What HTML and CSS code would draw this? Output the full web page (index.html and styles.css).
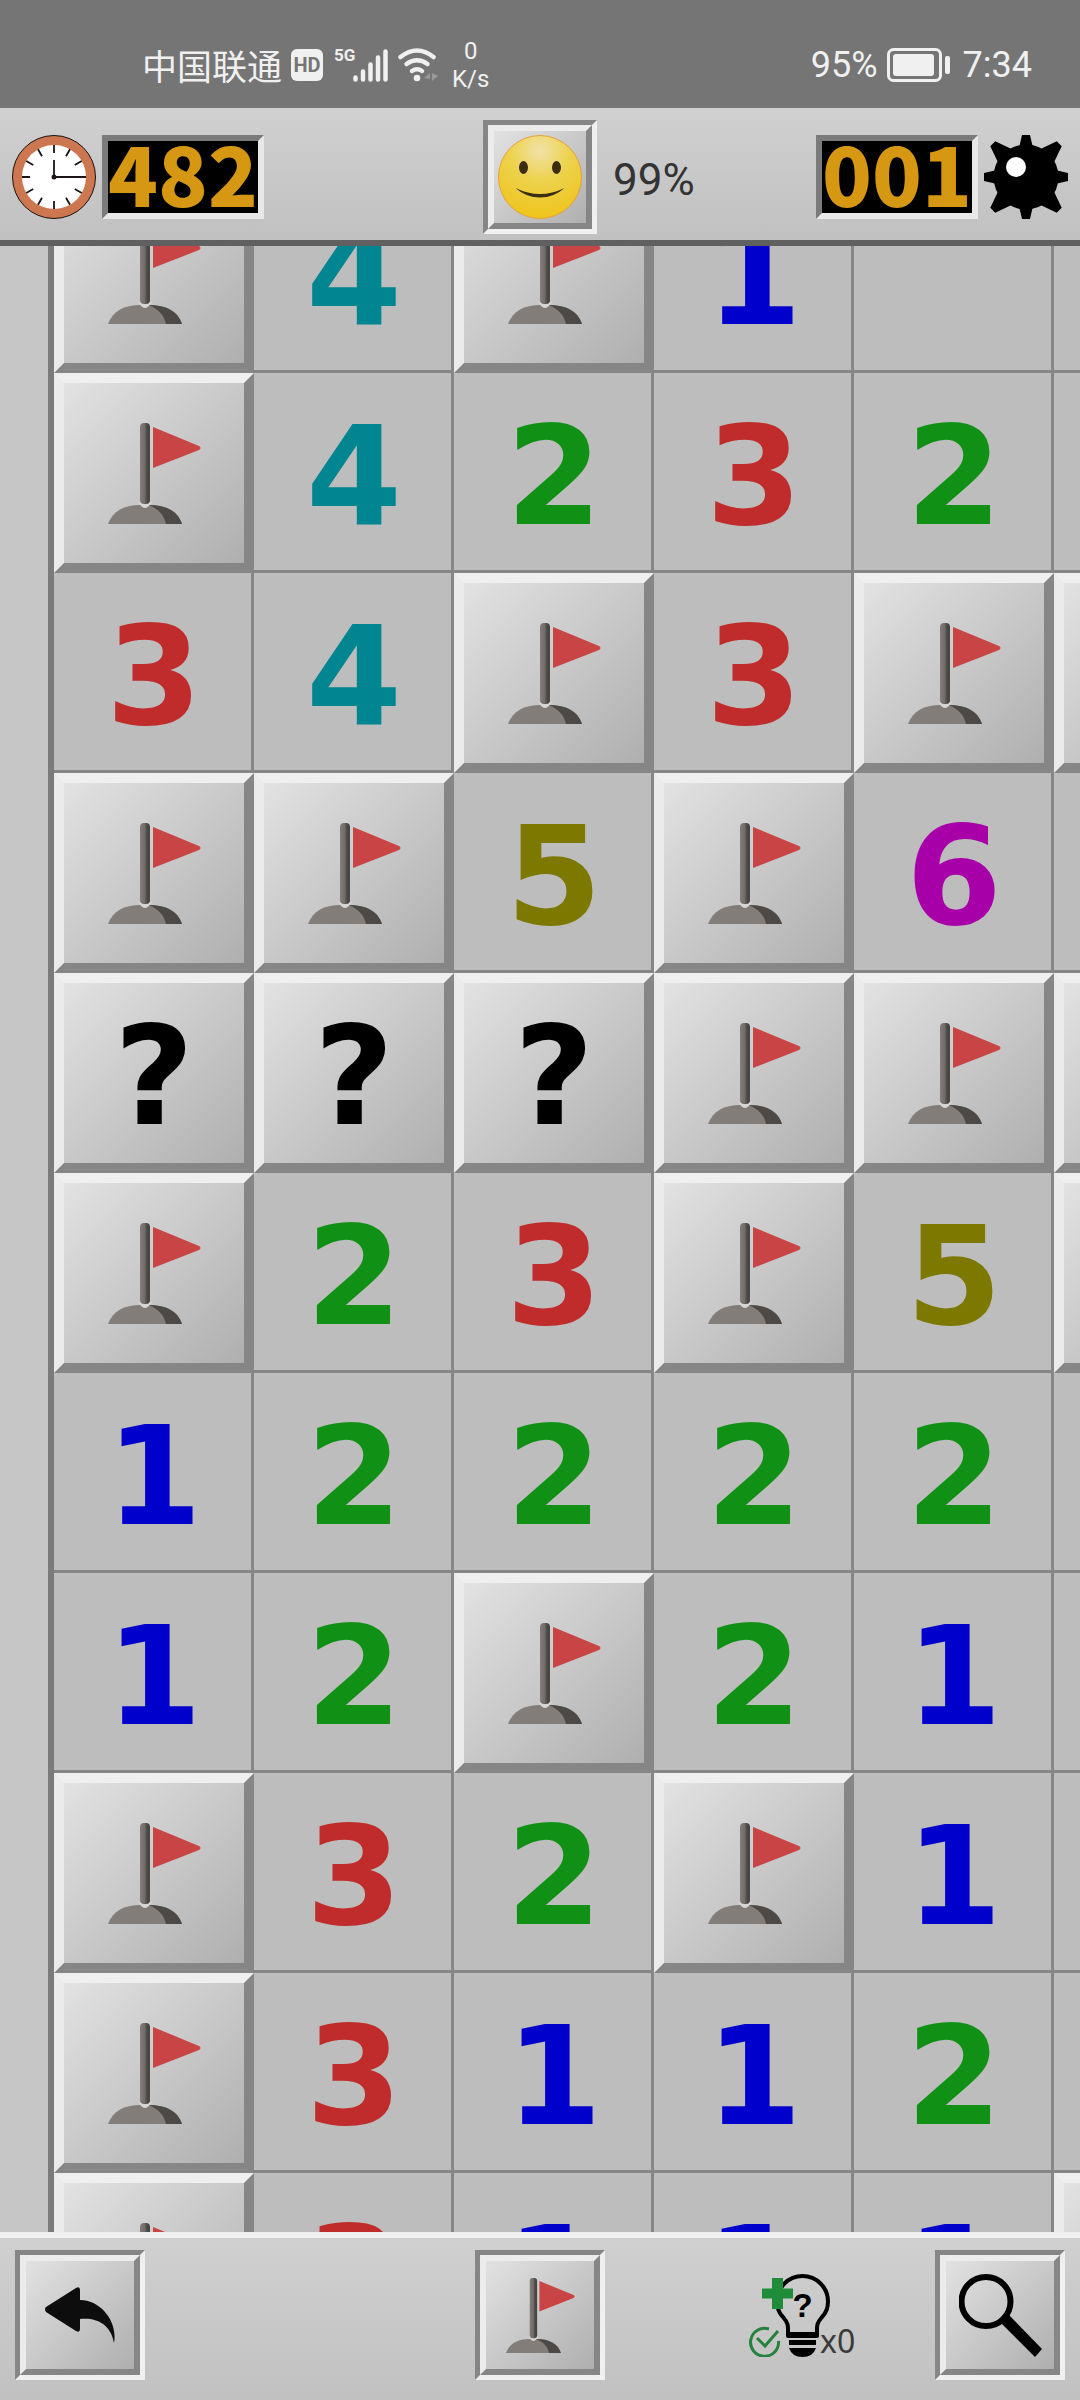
FILE: index.html
```html
<!DOCTYPE html>
<html lang="en">
<head>
<meta charset="utf-8">
<meta name="viewport" content="width=device-width, initial-scale=1">
<title>Minesweeper</title>
<link rel="stylesheet" href="styles.css">
</head>
<body>
<svg class="defs" aria-hidden="true">
  <linearGradient id="pole" x1="0" x2="1" y1="0" y2="0">
    <stop offset="0" stop-color="#847f7c"/><stop offset=".5" stop-color="#6f6a67"/><stop offset=".7" stop-color="#4a4644"/><stop offset="1" stop-color="#4a4644"/>
  </linearGradient>
  <symbol id="flag" viewBox="0 0 101 101">
    <path d="M4 101C9 88 20 82 36 82H46C62 82 74 88 78 101Z" fill="#837d79"/>
    <path d="M44 82C62 82 74 88 78 101H62C60 92 55 86 44 82Z" fill="#4d4946"/>
    <path d="M36 80Q41 88 46 80Z" fill="#d6d6d6" stroke="#d6d6d6" stroke-width="2"/>
    <rect x="36" y="0" width="10" height="81" rx="4" fill="url(#pole)"/>
    <path d="M49 4L95 23Q98 25 95 27L49 45Z" fill="#c84445"/>
  </symbol>
</svg>
<div class="app">
  <div class="status">
    <div class="status-group">
      <span class="carrier">中国联通</span>
      <span class="hd">HD</span>
      <span class="net">5G</span>
      <svg class="signal" width="35" height="33" viewBox="0 0 35 33" aria-hidden="true"><path d="M2.500 28.500v2M10 22.500v8M17.500 15.500v15M25 8.500v22M32.500 2.500v28" stroke="#f0f0f0" stroke-width="4.500" stroke-linecap="round"/></svg>
      <svg class="wifi" width="40" height="34" viewBox="0 0 40 34" aria-hidden="true"><g fill="none" stroke="#f0f0f0" stroke-width="4.500" stroke-linecap="round"><path d="M2.500 9Q19 -4 35.500 9"/><path d="M8.500 16Q19 8.500 29.500 16"/><path d="M14 23Q19 19.500 24 23"/></g><circle cx="19" cy="30" r="3.300" fill="#f0f0f0"/><path d="M26 30l6-5v9v-3M40 28l-6 5v-8z" fill="#999"/></svg>
      <span class="speed"><span>0</span><span>K/s</span></span>
    </div>
    <div class="status-group">
      <span class="clock-text">95%</span>
      <svg class="battery" width="63" height="34" viewBox="0 0 63 34" aria-hidden="true"><rect x="1.500" y="1.500" width="52" height="31" rx="5" fill="none" stroke="#f0f0f0" stroke-width="3"/><rect x="6" y="6" width="41" height="22" rx="3" fill="#f0f0f0"/><rect x="58" y="8" width="5" height="18" rx="2" fill="#f0f0f0"/></svg>
      <span class="clock-text time">7:34</span>
    </div>
  </div>

  <header class="bar header">
    <div class="left">
      <svg class="icon" viewBox="0 0 84 84" role="img" aria-label="Time">
        <circle cx="42" cy="42" r="41.500" fill="#cd7750" stroke="#1c100c"/><circle cx="42" cy="42" r="32" fill="#fff"/>
        <g stroke="#1c1414" stroke-width="1.800"><path id="t" d="M42 10v8M42 66v8M10 42h8M66 42h8"/><use href="#t" transform="rotate(30 42 42)"/><use href="#t" transform="rotate(60 42 42)"/><path d="M42 25v17h24" fill="none"/></g><circle cx="42" cy="42" r="2.500" fill="#1c1414"/>
      </svg>
      <output class="counter">482</output>
    </div>
    <button class="key face" aria-label="New game"><span class="key-face">
      <svg class="icon" viewBox="0 0 84 84" aria-hidden="true">
        <radialGradient id="skin" cx=".5" cy=".18" r=".8"><stop offset="0" stop-color="#f1e2a8"/><stop offset=".45" stop-color="#edd24e"/><stop offset="1" stop-color="#efc51e"/></radialGradient>
        <circle cx="42" cy="42" r="41.500" fill="url(#skin)" stroke="#e6a13a"/>
        <ellipse cx="25.500" cy="32.500" rx="4.500" ry="6.500" fill="#3a2d10"/><ellipse cx="58.500" cy="32.500" rx="4.500" ry="6.500" fill="#3a2d10"/>
        <path d="M17.500 53Q42 65 66.500 53Q56 62.500 42 62.500Q28 62.500 17.500 53Z" fill="#3a2d10"/>
      </svg></span></button>
    <div class="right">
      <span class="percent">99%</span>
      <div class="left">
        <output class="counter">001</output>
        <svg class="icon" viewBox="0 0 84 84" role="img" aria-label="Mines left">
          <circle cx="42" cy="42" r="32.500"/>
          <path d="M38 0h8l3 13H35zM38 84h8l3-13H35zM0 38v8l13 3V35zM84 38v8l-13 3V35z"/>
          <path d="M38.500 -5h7l6 17H32.500zM38.500 89h7l6-17H32.500zM-5 38.500v7l17 6V32.500zM89 38.500v7l-17 6V32.500z" transform="rotate(45 42 42)"/>
          <circle cx="32" cy="32" r="10" fill="#fff"/>
        </svg>
      </div>
    </div>
  </header>

  <main class="field">
    <div class="grid">
      <button class="cell up"><svg class="flag"><use href="#flag"/></svg></button>
      <button class="cell n4">4</button>
      <button class="cell up"><svg class="flag"><use href="#flag"/></svg></button>
      <button class="cell n1">1</button>
      <button class="cell"></button>
      <button class="cell"></button>

      <button class="cell up"><svg class="flag"><use href="#flag"/></svg></button>
      <button class="cell n4">4</button>
      <button class="cell n2">2</button>
      <button class="cell n3">3</button>
      <button class="cell n2">2</button>
      <button class="cell"></button>

      <button class="cell n3">3</button>
      <button class="cell n4">4</button>
      <button class="cell up"><svg class="flag"><use href="#flag"/></svg></button>
      <button class="cell n3">3</button>
      <button class="cell up"><svg class="flag"><use href="#flag"/></svg></button>
      <button class="cell up"></button>

      <button class="cell up"><svg class="flag"><use href="#flag"/></svg></button>
      <button class="cell up"><svg class="flag"><use href="#flag"/></svg></button>
      <button class="cell n5">5</button>
      <button class="cell up"><svg class="flag"><use href="#flag"/></svg></button>
      <button class="cell n6">6</button>
      <button class="cell"></button>

      <button class="cell up"><span class="mark">?</span></button>
      <button class="cell up"><span class="mark">?</span></button>
      <button class="cell up"><span class="mark">?</span></button>
      <button class="cell up"><svg class="flag"><use href="#flag"/></svg></button>
      <button class="cell up"><svg class="flag"><use href="#flag"/></svg></button>
      <button class="cell up"></button>

      <button class="cell up"><svg class="flag"><use href="#flag"/></svg></button>
      <button class="cell n2">2</button>
      <button class="cell n3">3</button>
      <button class="cell up"><svg class="flag"><use href="#flag"/></svg></button>
      <button class="cell n5">5</button>
      <button class="cell up"></button>

      <button class="cell n1">1</button>
      <button class="cell n2">2</button>
      <button class="cell n2">2</button>
      <button class="cell n2">2</button>
      <button class="cell n2">2</button>
      <button class="cell"></button>

      <button class="cell n1">1</button>
      <button class="cell n2">2</button>
      <button class="cell up"><svg class="flag"><use href="#flag"/></svg></button>
      <button class="cell n2">2</button>
      <button class="cell n1">1</button>
      <button class="cell"></button>

      <button class="cell up"><svg class="flag"><use href="#flag"/></svg></button>
      <button class="cell n3">3</button>
      <button class="cell n2">2</button>
      <button class="cell up"><svg class="flag"><use href="#flag"/></svg></button>
      <button class="cell n1">1</button>
      <button class="cell"></button>

      <button class="cell up"><svg class="flag"><use href="#flag"/></svg></button>
      <button class="cell n3">3</button>
      <button class="cell n1">1</button>
      <button class="cell n1">1</button>
      <button class="cell n2">2</button>
      <button class="cell"></button>

      <button class="cell up"><svg class="flag"><use href="#flag"/></svg></button>
      <button class="cell n3">3</button>
      <button class="cell n1">1</button>
      <button class="cell n1">1</button>
      <button class="cell n1">1</button>
      <button class="cell up"></button>
    </div>
  </main>

  <footer class="bar footer">
    <div class="left"><button class="key tool" aria-label="Undo"><span class="key-face">
      <svg width="70" height="56" viewBox="0 0 70 56" aria-hidden="true"><path d="M1 20Q-1 22 1 25L31 44Q35 46 35 42V32C51 30 66 37 69 56C73 35 56 13 35 13V3Q35 -1 31 1Z" fill="#0d0d0d"/></svg>
    </span></button></div>
    <button class="key tool" aria-label="Flag mode"><span class="key-face"><svg class="flag-small"><use href="#flag"/></svg></span></button>
    <div class="tools">
      <button class="hint" aria-label="Hints">
        <svg width="83" height="83" viewBox="0 0 83 83" aria-hidden="true">
          <path d="M39 62H68C68 52 67 50 73 43C78 38 79 33 79 27.500A25.500 25.500 0 0 0 28 27.500C28 33 29 38 34 43C40 50 39 52 39 62Z" fill="none" stroke="#000" stroke-width="4" stroke-linejoin="round"/>
          <path d="M38 58h31v5H38zM40 66h27v5H40zM40 74h27Q64 83 53.500 83Q43 83 40 74Z"/>
          <text class="hint-mark" x="53.500" y="43" text-anchor="middle">?</text>
          <path d="M23 4h11v10.500h10v10H34V35H23V24.500H13v-10h10z" fill="#1f8c3a"/>
          <g fill="none" stroke="#26813d" stroke-width="3"><path d="M20 55A14 14 0 1 0 29.500 67"/><path d="M8 64l8 8 13-15"/></g>
        </svg><span class="hint-count">x0</span>
      </button>
      <button class="key tool" aria-label="Zoom"><span class="key-face">
        <svg width="83" height="83" viewBox="0 0 83 83" aria-hidden="true"><circle cx="27" cy="27.500" r="24.500" fill="none" stroke="#000" stroke-width="6"/><path d="M50 41L83 75L76 83L42 49Z"/></svg>
      </span></button>
    </div>
  </footer>
</div>
</body>
</html>
```
FILE: styles.css
```css
* { box-sizing: border-box; }
body { margin: 0; background: #c6c6c6; font-family: Roboto, "Noto Sans CJK SC", sans-serif; }
button { margin: 0; padding: 0; border: 0; background: none; font: inherit; color: inherit; cursor: pointer; }
svg { display: block; flex: none; }
.defs { position: absolute; width: 0; height: 0; }

.app { display: flex; flex-direction: column; height: 100vh; }

/* phone status bar */
.status { display: flex; justify-content: space-between; align-items: flex-start; height: 108px; flex: none; padding: 39px 48px 0 142px; background: #757575; color: #f0f0f0; }
.status-group { display: flex; align-items: center; height: 52px; }
.carrier { font: 35px/52px "Noto Sans CJK SC", sans-serif; }
.hd { width: 32px; height: 32px; margin-left: 9px; border-radius: 6px; background: #f0f0f0; color: #757575; font: 700 20px/33px Roboto, sans-serif; text-align: center; }
.net { align-self: flex-start; margin: 6px 0 0 11px; width: 18px; font: 700 17px/20px "Liberation Sans Narrow", Roboto, sans-serif; }
.signal { margin-left: 1px; }
.wifi { margin-left: 10px; }
.speed { display: flex; flex-direction: column; align-items: center; margin-left: 14px; font-size: 24px; line-height: 28px; }
.clock-text { font-size: 36px; line-height: 52px; }
.battery { margin-left: 9px; }
.time { margin-left: 13px; }

/* top and bottom bars */
.bar { display: grid; grid-template-columns: 1fr auto 1fr; align-items: center; flex: none; background: linear-gradient(#d0d0d0, #c1c1c1); }
.left, .right, .tools { display: flex; align-items: center; gap: 6px; }
.right { justify-content: space-between; }
.header { height: 138px; padding: 6px 12px 0; border-bottom: 6px solid #606060; }
.icon { width: 84px; height: 84px; }
.counter { width: 162px; height: 84px; border: 6px solid; border-color: #7b7b7b #e8e8e8 #e8e8e8 #7b7b7b; background: #000; color: #d69812; font: 900 82px/62px "Noto Sans CJK SC", sans-serif; text-align: center; }
.percent { margin-left: 16px; padding-top: 6px; font-size: 44px; line-height: 48px; color: #333; }

.key { display: flex; border: 5px solid; border-color: #868686 #f0f0f0 #f0f0f0 #868686; }
.key-face { display: flex; flex: 1; align-self: stretch; align-items: center; justify-content: center; border: 6px solid; border-color: #ececec #868686 #868686 #ececec; background: linear-gradient(135deg, #e2e2e2, #afafaf); }
.face { width: 114px; height: 114px; }
.tool { width: 130px; height: 130px; }

.footer { padding: 12px 15px 20px; border-top: 6px solid #f0f0f0; }
.tools { justify-content: flex-end; gap: 82px; }
.flag-small { width: 75px; height: 75px; }
.hint { display: flex; align-items: flex-end; width: 104px; color: #3a3a3a; }
.hint-mark { font: 700 33px "Liberation Sans", sans-serif; }
.hint-count { margin-left: -12px; font: 32px/32px "Noto Sans", sans-serif; }

/* minefield, scrolled part of the way into its first row */
.field { flex: 1; min-height: 0; overflow: hidden; padding-left: 48px; background: #c6c6c6; }
.grid { display: grid; grid-template-columns: repeat(6, 200px); grid-auto-rows: 200px; width: max-content; margin-top: -73px; border-left: 6px solid #7b7b7b; }
.cell { display: flex; align-items: center; justify-content: center; border: solid #868686; border-width: 0 3px 3px 0; padding: 11px 0 0 3px; background: #bdbdbd; font: 700 138px/160px "DejaVu Sans", sans-serif; }
.up { padding: 0; border-width: 10px; border-color: #efefef #868686 #868686 #ebebeb; background: linear-gradient(135deg, #e2e2e2, #afafaf); color: #000; }
.mark { padding-top: 8px; }
.flag { width: 101px; height: 101px; }
.n1 { color: #0000cd; }
.n2 { color: #109015; }
.n3 { color: #c02c2c; }
.n4 { color: #008591; }
.n5 { color: #7d7800; }
.n6 { color: #a800a8; }
```
